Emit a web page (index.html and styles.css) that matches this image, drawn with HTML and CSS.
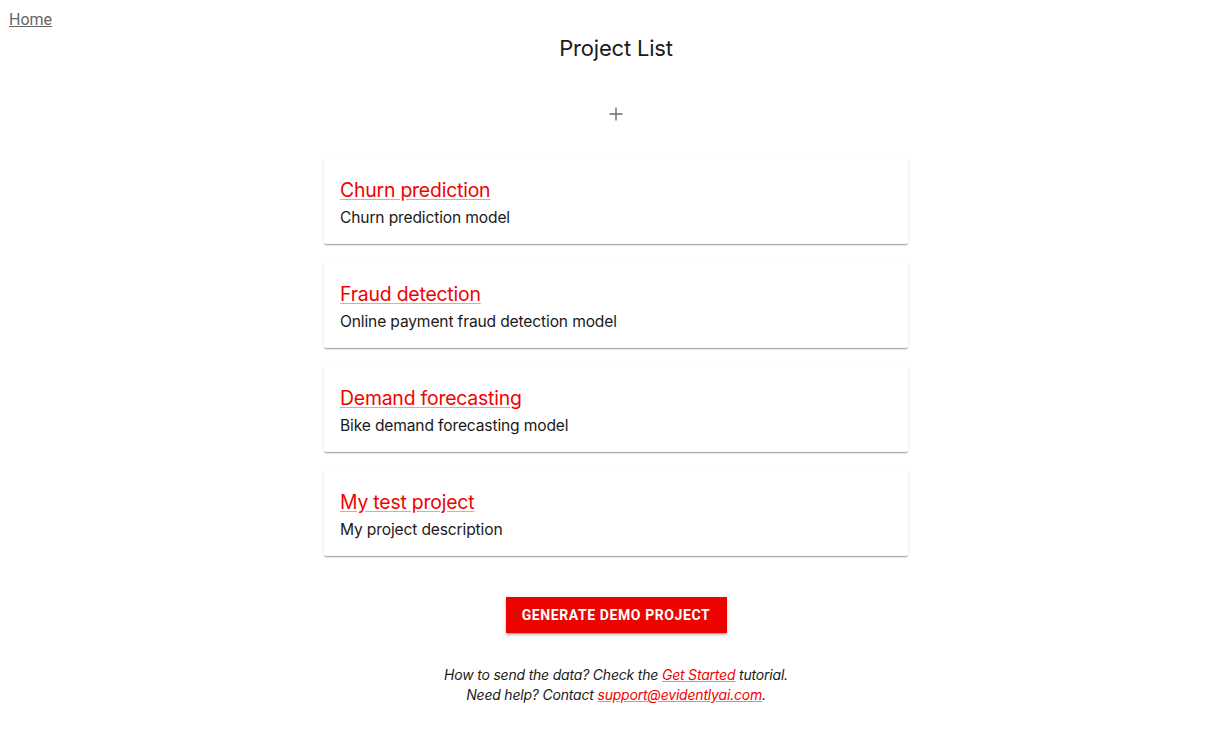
FILE: index.html
```html
<!DOCTYPE html>
<html>
<head>
<meta charset="utf-8">
<link rel="stylesheet" href="styles.css">
</head>
<body>
<nav class="crumbs"><a class="home" href="#">Home</a></nav>
<main class="page">
  <h1 class="title">Project List</h1>
  <div class="add-row">
    <button class="add" aria-label="Add project">
      <svg width="16" height="16" viewBox="0 0 16 16"><path d="M8 1.5v13M1.5 8h13" stroke="#6b6b6b" stroke-width="1.4" fill="none"/></svg>
    </button>
  </div>
  <ul class="projects">
    <li class="card"><a class="card-title" href="#">Churn prediction</a><p class="card-desc">Churn prediction model</p></li>
    <li class="card"><a class="card-title" href="#">Fraud detection</a><p class="card-desc">Online payment fraud detection model</p></li>
    <li class="card"><a class="card-title" href="#">Demand forecasting</a><p class="card-desc">Bike demand forecasting model</p></li>
    <li class="card"><a class="card-title" href="#">My test project</a><p class="card-desc">My project description</p></li>
  </ul>
  <div class="btn-row"><button class="demo">Generate demo project</button></div>
  <p class="help">How to send the data? Check the <a href="#">Get Started</a> tutorial.<br>Need help? Contact <a href="#">support@evidentlyai.com</a>.</p>
</main>
</body>
</html>
```
FILE: styles.css
```css
* { box-sizing: border-box; }
html, body { margin: 0; background: #fff; }
body { font-family: Inter, Roboto, "Noto Sans", sans-serif; color: #1a1a1a; }
.crumbs { padding: 9px 9px 0; height: 30px; }
.home { font-family: Roboto, sans-serif; color: #666; font-size: 16px; line-height: 20px; text-decoration: underline; }
.page { display: flex; flex-direction: column; align-items: center; padding-left: 4px; }
.title { margin: 2px 0 0; font-size: 22px; font-weight: 400; line-height: 32px; color: #1a1a1a; letter-spacing: -0.2px; }
.add-row { margin-top: 34px; height: 32px; display: flex; align-items: center; }
.add { border: 0; background: none; padding: 0; width: 32px; height: 32px; display: flex; align-items: center; justify-content: center; }
.projects { list-style: none; margin: 28px 0 0; padding: 0; width: 584px; display: flex; flex-direction: column; gap: 18px; }
.card { background: #fff; padding: 19px 16px 15px; height: 86px; border-radius: 2px;
  box-shadow: 0 2px 1px -1px rgba(0,0,0,.2), 0 1px 1px 0 rgba(0,0,0,.14), 0 1px 3px 0 rgba(0,0,0,.12); }
.card-title { display: block; color: #ed0400; font-size: 19.4px; line-height: 26px; letter-spacing: -0.2px; text-decoration: underline; text-decoration-color: rgba(237,4,0,.4); text-underline-offset: 2px; width: max-content; }
.card-desc { margin: 4px 0 0; font-size: 15.6px; line-height: 22px; color: #1a1a1a; letter-spacing: -0.15px; }
.btn-row { margin-top: 41px; }
.demo { background: #ed0400; color: #fff; border: 0; border-radius: 0; height: 36px; width: 221px; font-family: Roboto, sans-serif; font-weight: 700; font-size: 14px; letter-spacing: .6px; text-transform: uppercase;
  box-shadow: 0 3px 1px -2px rgba(0,0,0,.2), 0 2px 2px 0 rgba(0,0,0,.14), 0 1px 5px 0 rgba(0,0,0,.12); }
.help { margin: 32px 0 0; text-align: center; font-style: italic; font-size: 14px; line-height: 20px; color: #1a1a1a; letter-spacing: -0.2px; }
.help a { color: #ed0400; text-decoration: underline; text-decoration-color: rgba(237,4,0,.5); }
```
